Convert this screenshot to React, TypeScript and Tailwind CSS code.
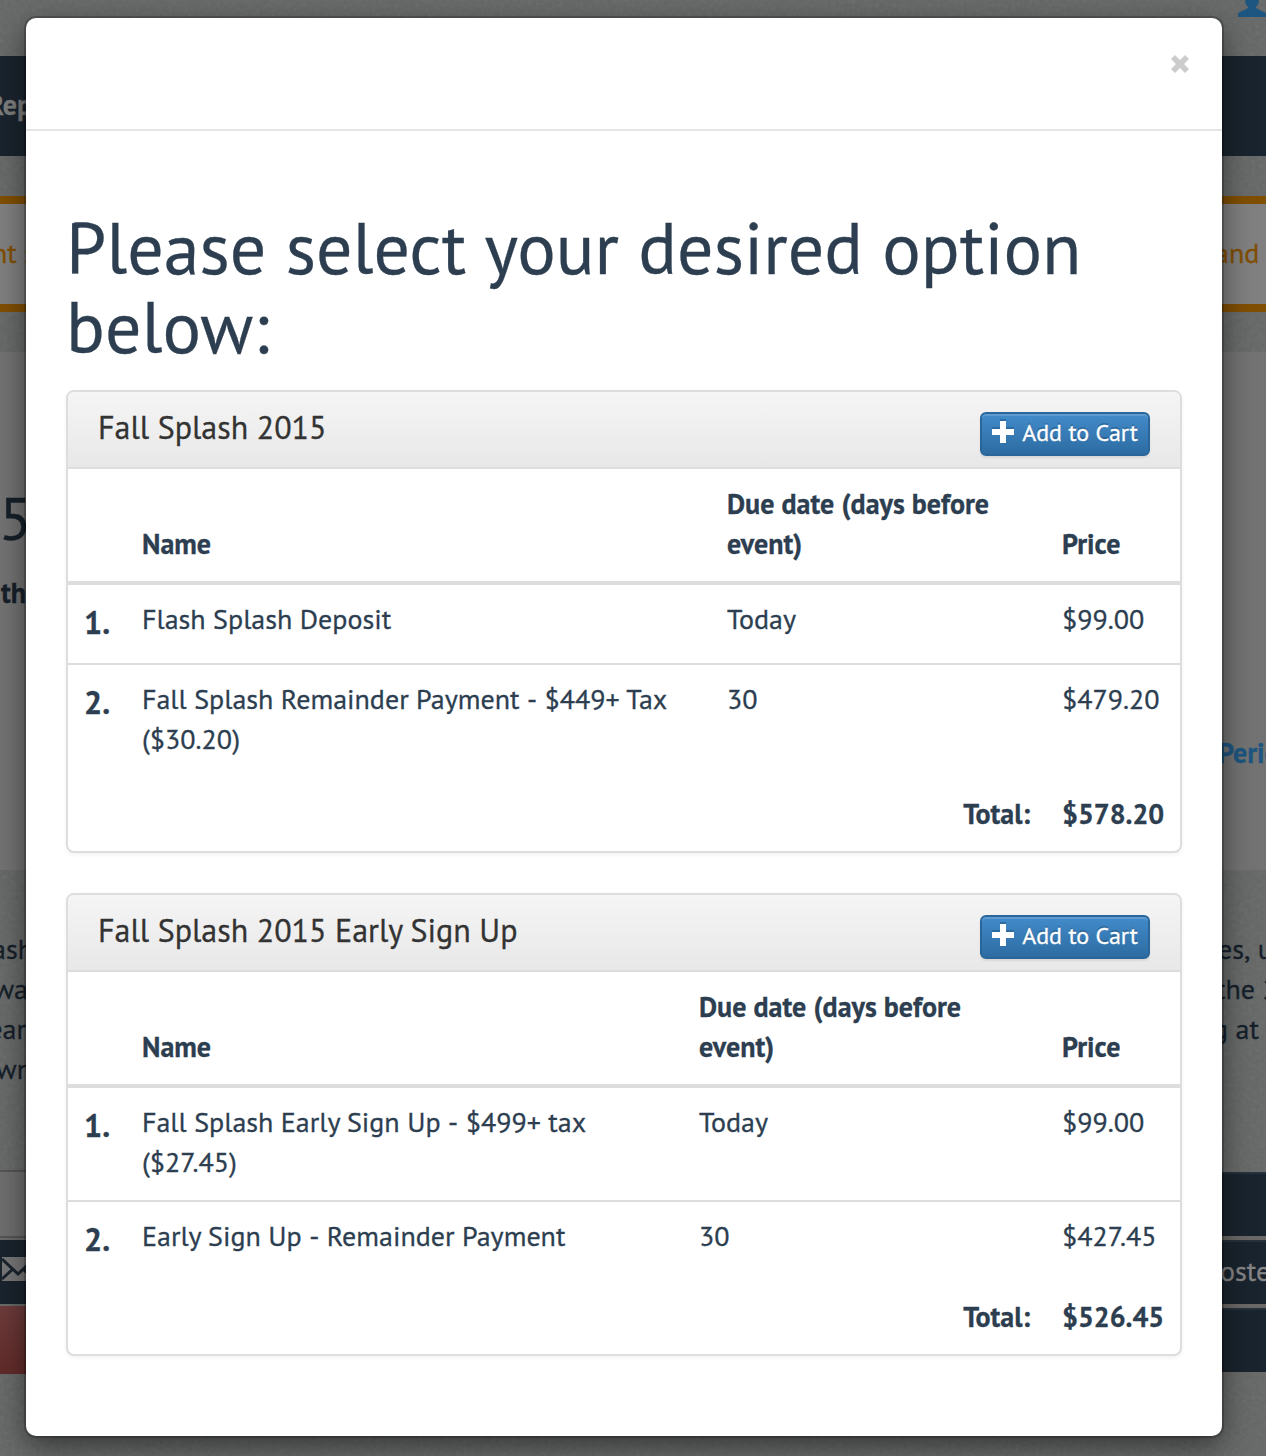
import { Fragment } from "react";
import type { ReactNode } from "react";

type Payment = {
  name: string;
  due: string;
  price: string;
};

type PaymentOption = {
  title: string;
  nameCol: string;
  dueCol: string;
  payments: Payment[];
  total: string;
};

const options: PaymentOption[] = [
  {
    title: "Fall Splash 2015",
    nameCol: "w-[585px]",
    dueCol: "w-[335px]",
    payments: [
      { name: "Flash Splash Deposit", due: "Today", price: "$99.00" },
      {
        name: "Fall Splash Remainder Payment - $449+ Tax ($30.20)",
        due: "30",
        price: "$479.20",
      },
    ],
    total: "$578.20",
  },
  {
    title: "Fall Splash 2015 Early Sign Up",
    nameCol: "w-[557px]",
    dueCol: "w-[363px]",
    payments: [
      {
        name: "Fall Splash Early Sign Up - $499+ tax ($27.45)",
        due: "Today",
        price: "$99.00",
      },
      { name: "Early Sign Up - Remainder Payment", due: "30", price: "$427.45" },
    ],
    total: "$526.45",
  },
];

function PlusIcon() {
  return (
    <svg width="22" height="24" viewBox="0 -2 22 24" className="-mt-1 mr-2 shrink-0">
      <path d="M8 -2h6v8h8v6H0V6h8z" fill="#2d6ca2" />
      <path d="M8 0h6v8h8v6h-8v8H8v-8H0V8h8z" fill="#fff" />
    </svg>
  );
}

function CloseIcon() {
  return (
    <svg width="18" height="18" viewBox="0 0 18 18">
      <path
        d="M4 0L9 5L14 0L18 4L13 9L18 14L14 18L9 13L4 18L0 14L5 9L0 4Z"
        fill="#ccc"
      />
    </svg>
  );
}

// Keeps the full space on both sides of the dash
function PaymentName({ name }: { name: string }) {
  return (
    <>
      {name.split(" - ").map((part, i) => (
        <Fragment key={part}>
          {i > 0 && <span className="[font-kerning:none]"> - </span>}
          {part}
        </Fragment>
      ))}
    </>
  );
}

// One horizontal strip of the page behind the dialog
function Band({
  className,
  left,
  right,
}: {
  className: string;
  left?: ReactNode;
  right?: ReactNode;
}) {
  return (
    <div className={`flex justify-between ${className}`}>
      <div className="flex w-[26px] items-center justify-end overflow-hidden whitespace-nowrap">
        {left}
      </div>
      <div className="flex w-[44px] items-center overflow-hidden whitespace-nowrap">{right}</div>
    </div>
  );
}

function PageBehind() {
  return (
    <div className="relative text-[28px] leading-10 text-[#16202a] [-webkit-text-stroke:0.3px]">
      {/* Paper texture */}
      <svg className="absolute inset-0 h-[1456px] w-full opacity-10">
        <filter id="grain">
          <feTurbulence type="fractalNoise" baseFrequency="0.25" numOctaves="3" />
          <feColorMatrix type="saturate" values="0" />
        </filter>
        <rect width="100%" height="100%" filter="url(#grain)" />
      </svg>

      <div className="relative flex flex-col">
        <div className="flex h-14 items-start justify-end overflow-hidden">
          <svg width="28" height="17" viewBox="0 0 28 17" fill="#1d5680">
            <path d="M7 0h14c0 3-1 5-3 7v1l10 5v4H0v-4c3-2 7-3 10-5V7C8 5 7 3 7 0z" />
          </svg>
        </div>
        <Band
          className="h-[100px] bg-[#1a242e] pb-[2px] font-bold text-[#7d7d7d]"
          left={<span className="-mr-[6px]">Rep</span>}
        />
        <div className="h-10" />
        <Band
          className="h-[116px] border-y-8 border-[#804f04] bg-[#808080] pb-[3px] text-[#804f04]"
          left={<span className="-mr-[10px]">nt s</span>}
          right={<span className="-ml-[7px]">and</span>}
        />
        <div className="h-10" />
        <div className="h-[518px] bg-[#737373] pt-[126px]">
          <Band className="h-20" left={<span className="w-[27px] text-[60px]">5</span>} />
          <Band
            className="h-20 pb-[11px] font-bold"
            left={<span className="w-[25px]">th</span>}
          />
          <Band
            className="mt-[95px] h-10 font-bold text-[#1d5680]"
            right={<span className="-ml-[4px]">Period</span>}
          />
        </div>
        <div className="h-[300px] pt-[59px] [font-kerning:none]">
          <Band
            className="h-10"
            left={<span className="-mr-[7px]">ash</span>}
            right={<span className="-ml-[4px]">es, up</span>}
          />
          <Band
            className="h-10"
            left={<span className="-mr-[2px]">wa</span>}
            right={<span className="-ml-[6px]">the 2</span>}
          />
          <Band
            className="h-10"
            left={<span>ear</span>}
            right={<span className="-ml-[9px]">g at</span>}
          />
          <Band className="h-10" left={<span className="-mr-[6px]">wn</span>} />
        </div>
        <div className="flex justify-between">
          <div className="flex w-[26px] flex-col overflow-hidden">
            <div className="h-[68px] border-y-2 border-[#555] bg-[#6e6e6e]" />
            <div className="mt-[2px] flex h-16 items-center bg-[#1a242e] pb-[6px]">
              <svg width="32" height="24" viewBox="0 0 32 24" className="ml-[2px] shrink-0">
                <path d="M0 0h32v24H0z" fill="#777" />
                <path
                  d="M0 2l16 15L32 2M0 22l11-10M32 22L21 12"
                  stroke="#1a242e"
                  strokeWidth="3"
                  fill="none"
                />
              </svg>
            </div>
            <div className="mt-[2px] h-[68px] bg-linear-to-b from-[#6d3c3b] to-[#612b2a]" />
          </div>
          <div className="mt-[2px] flex w-[44px] flex-col gap-1 overflow-hidden bg-[#6b6967] whitespace-nowrap text-[#858585]">
            <div className="h-16 border-t-2 border-[#25313b] bg-[#1a242e]" />
            <div className="flex h-16 items-center border-t-2 border-[#25313b] bg-[#1a242e] pb-1">
              <span className="-ml-[2px]">oster</span>
            </div>
            <div className="h-16 border-t-2 border-[#25313b] bg-[#1a242e]" />
          </div>
        </div>
      </div>
    </div>
  );
}

function OptionPanel({ option }: { option: PaymentOption }) {
  return (
    <section className="overflow-hidden rounded-lg border-2 border-[#ddd] bg-white shadow-[0_2px_4px_rgba(0,0,0,0.05)]">
      <div className="flex h-[77px] items-start justify-between border-b-2 border-[#ddd] bg-linear-to-b from-[#f5f5f5] to-[#e8e8e8] px-[30px] pt-[18px]">
        <h2 className="text-[32px] leading-[35px] text-[#333]">{option.title}</h2>
        <button
          type="button"
          className="mt-[2px] flex h-11 w-[170px] items-center justify-center rounded-[6px] border-2 border-[#2b669a] bg-linear-to-b from-[#428bca] to-[#2d6ca2] pb-[3px] text-[24px] text-white shadow-[inset_0_2px_0_rgba(255,255,255,0.15),0_2px_2px_rgba(0,0,0,0.075)] text-shadow-[0_-2px_0_rgba(0,0,0,0.2)]"
        >
          <PlusIcon />
          <span className="whitespace-nowrap">Add to Cart</span>
        </button>
      </div>

      <table className="w-full table-fixed border-separate border-spacing-0 text-left">
        <thead>
          <tr className="align-bottom [&>th]:border-b-4 [&>th]:border-[#ddd] [&>th]:px-4 [&>th]:pt-[15px] [&>th]:pb-[17px]">
            <th className="w-[58px]" />
            <th className={option.nameCol}>Name</th>
            <th className={option.dueCol}>
              Due date (days before <br />
              event)
            </th>
            <th className="w-[134px]">Price</th>
          </tr>
        </thead>
        <tbody className="[&>tr+tr>td]:border-t-2 [&>tr+tr>td]:border-[#ddd]">
          {option.payments.map((payment, i) => (
            <tr key={payment.name} className="align-top [&>td]:px-4 [&>td]:pt-[14px] [&>td]:pb-[18px]">
              <td className="text-[32px] leading-[46px] font-bold">{i + 1}.</td>
              <td>
                <PaymentName name={payment.name} />
              </td>
              <td>{payment.due}</td>
              <td>{payment.price}</td>
            </tr>
          ))}
        </tbody>
        <tfoot>
          <tr className="font-bold">
            <td colSpan={3} className="px-4 py-[17px] text-right">
              Total:
            </td>
            <td className="px-4 py-[17px]">{option.total}</td>
          </tr>
        </tfoot>
      </table>
    </section>
  );
}

export default function App() {
  return (
    <div className="relative h-[1456px] w-[1266px] overflow-hidden bg-[#646766] font-['PT_Sans','Open_Sans',sans-serif]">
      <PageBehind />

      <div
        role="dialog"
        className="absolute top-[18px] left-[26px] h-[1418px] w-[1196px] rounded-[10px] bg-white text-[28px] leading-10 text-[#2c3e50] shadow-[0_0_0_2px_rgba(0,0,0,0.2),0_10px_30px_rgba(0,0,0,0.5)] [-webkit-text-stroke:0.3px]"
      >
        <div className="flex h-[113px] items-start justify-end border-b-2 border-[#e5e5e5] pt-[37px] pr-[33px]">
          <button type="button" aria-label="Close">
            <CloseIcon />
          </button>
        </div>
        <div className="flex flex-col px-10 pt-[77px]">
          <h1 className="text-[72px] leading-[79px]">
            Please select your desired option <br />
            below:
          </h1>
          <div className="mt-6 flex flex-col gap-10">
            {options.map((option) => (
              <OptionPanel key={option.title} option={option} />
            ))}
          </div>
        </div>
      </div>
    </div>
  );
}
